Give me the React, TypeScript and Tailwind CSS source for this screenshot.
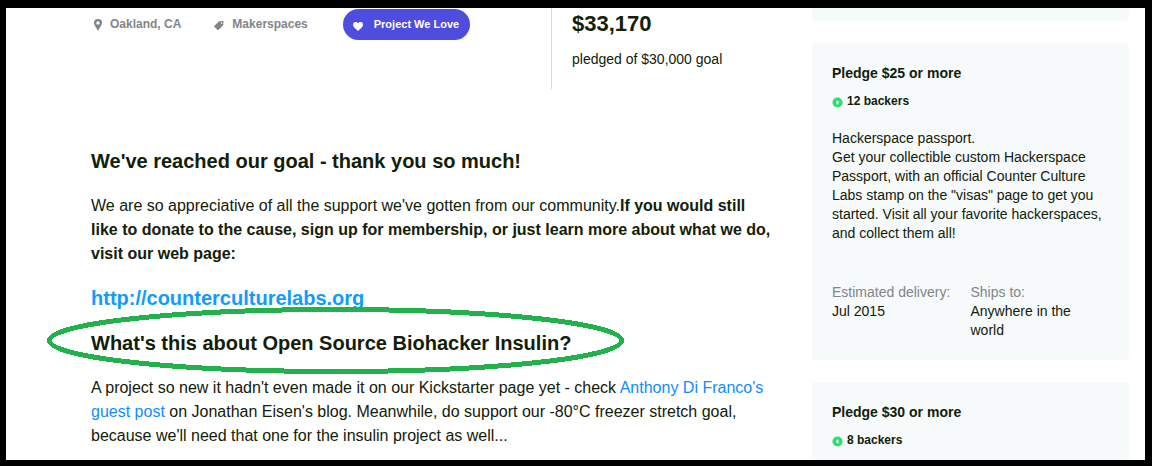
import type { ReactNode } from 'react'

interface Reward {
  title:     string
  backers:   string
  heading:   string
  body:      string
  delivery:  string
  shipsTo:   string
}

const REWARDS: Reward[] = [
  {
    title:    'Pledge $25 or more',
    backers:  '12 backers',
    heading:  'Hackerspace passport.',
    body:     'Get your collectible custom Hackerspace Passport, with an official Counter Culture Labs stamp on the "visas" page to get you started. Visit all your favorite hackerspaces, and collect them all!',
    delivery: 'Jul 2015',
    shipsTo:  'Anywhere in the world',
  },
  {
    title:    'Pledge $30 or more',
    backers:  '8 backers',
    heading:  '',
    body:     '',
    delivery: '',
    shipsTo:  '',
  },
]

function PinIcon() {
  return (
    <svg width="8" height="12" viewBox="0 0 8 12" className="mt-0.5 fill-current" aria-hidden="true">
      <path fillRule="evenodd" d="M4 0a4 4 0 0 0-4 4c0 2.800 3 5 4 8 1-3 4-5.200 4-8a4 4 0 0 0-4-4Zm0 2.300a1.700 1.700 0 1 1 0 3.400 1.700 1.700 0 0 1 0-3.400Z" />
    </svg>
  )
}

function TagIcon() {
  return (
    <svg width="10" height="9" viewBox="0 0 10 9" className="mt-1 fill-current" aria-hidden="true">
      <path fillRule="evenodd" d="M5 .3 8.800 0q.7 0 .7.700L9.200 4.300 4.600 8.700q-.6.500-1.200 0L.5 6q-.6-.6 0-1.200ZM7.600 1.200a.8.800 0 1 0 0 1.600.8.800 0 0 0 0-1.600Z" />
    </svg>
  )
}

function HeartIcon() {
  return (
    <svg width="10" height="9" viewBox="0 0 10 9" className="mt-1 fill-current" aria-hidden="true">
      <path d="M5 1.300C6-.4 10-.6 10 2.700 10 5.300 7 6.500 5 9 3 6.500 0 5.300 0 2.700 0-.6 4-.4 5 1.300Z" />
    </svg>
  )
}

function BackerIcon() {
  return (
    <svg width="11" height="11" viewBox="0 0 11 11" className="mt-0.5" aria-hidden="true">
      <circle cx="5.5" cy="5.5" r="5" fill="#2bde73" />
      <ellipse cx="5.5" cy="5.5" rx="1.3" ry="2" fill="#e6fbef" />
    </svg>
  )
}

function Card({ children }: { children?: ReactNode }) {
  return <section className="shrink-0 rounded bg-[#f6fafb] p-5 text-sm leading-[19px] last:grow">{children}</section>
}

function RewardCard({ reward }: { reward: Reward }) {
  return (
    <Card>
      <h3 className="leading-[21px] font-bold">{reward.title}</h3>
      <p className="mt-2 flex items-center gap-1 text-xs leading-[18px] font-bold">
        <BackerIcon />
        {reward.backers}
      </p>
      {reward.body && (
        <>
          <p className="mt-[19px]">
            {reward.heading}
            <br />
            {reward.body}
          </p>
          <dl className="mt-10 grid grid-cols-2">
            <div>
              <dt className="text-[#828587]">Estimated delivery:</dt>
              <dd>{reward.delivery}</dd>
            </div>
            <div className="pr-4">
              <dt className="text-[#828587]">Ships to:</dt>
              <dd>{reward.shipsTo}</dd>
            </div>
          </dl>
        </>
      )}
    </Card>
  )
}

export default function App() {
  return (
    <div className="flex h-screen gap-10 overflow-hidden border-t-8 border-r-[7px] border-b-[6px] border-l-[6px] border-black bg-white pr-4 pl-[85px] font-['Liberation_Sans',Arial,sans-serif] text-[#122008]">
      <main className="min-w-0 flex-1">
        {/* Project meta and funding total */}
        <div className="flex h-[81px]">
          <div className="flex flex-1 items-start pt-px text-xs font-bold text-[#828587]">
            <span className="flex h-[29px] items-center gap-2 pl-[3px]">
              <PinIcon />
              Oakland, CA
            </span>
            <span className="ml-[33px] flex h-[29px] items-center gap-2">
              <TagIcon />
              Makerspaces
            </span>
            <span className="ml-[35px] flex h-[31px] items-center gap-[11px] rounded-2xl bg-[#4f4ce0] pr-[11px] pl-2.5 text-[11px] text-white">
              <HeartIcon />
              Project We Love
            </span>
          </div>
          <div className="w-[221px] border-l border-[#d9d9de] pl-5">
            <p className="text-[22px] leading-8 font-bold">$33,170</p>
            <p className="mt-2.5 text-sm leading-[19px]">pledged of $30,000 goal</p>
          </div>
        </div>

        {/* Campaign story */}
        <article className="mt-[60px] space-y-5 text-base leading-6">
          <h2 className="text-xl leading-[25px] font-bold">We've reached our goal - thank you so much!</h2>
          <p>
            We are so appreciative of all the support we've gotten from our community.
            <strong>
              If you would still like to donate to the cause, sign up for membership, or just learn more about what we do,
              visit our web page:
            </strong>
          </p>
          <h2 className="text-xl leading-[25px] font-bold">
            <a href="http://counterculturelabs.org" className="text-[#0f9bff]">http://counterculturelabs.org</a>
          </h2>
          <div className="relative">
            <h2 className="text-xl leading-[25px] font-bold">What's this about Open Source Biohacker Insulin?</h2>
            <svg
              width="577"
              height="67"
              viewBox="0 0 577 67"
              className="pointer-events-none absolute -top-6 -left-11 max-w-none"
              shapeRendering="crispEdges"
              aria-hidden="true"
            >
              <ellipse cx="288.5" cy="33.5" rx="286" ry="31" fill="none" stroke="#22b14c" strokeWidth="5" />
            </svg>
          </div>
          <p>
            A project so new it hadn't even made it on our Kickstarter page yet - check{' '}
            <a href="#guest-post" className="text-[#0f8cff]">Anthony Di Franco's guest post</a> on Jonathan Eisen's blog.
            Meanwhile, do support our -80°C freezer stretch goal, because we'll need that one for the insulin project as
            well...
          </p>
        </article>
      </main>

      {/* Reward tiers */}
      <aside className="flex w-[317px] shrink-0 flex-col gap-[22px]">
        <div className="h-[13px] shrink-0 rounded-b bg-[#f6fafb]" />
        {REWARDS.map(r => (
          <RewardCard key={r.title} reward={r} />
        ))}
      </aside>
    </div>
  )
}
